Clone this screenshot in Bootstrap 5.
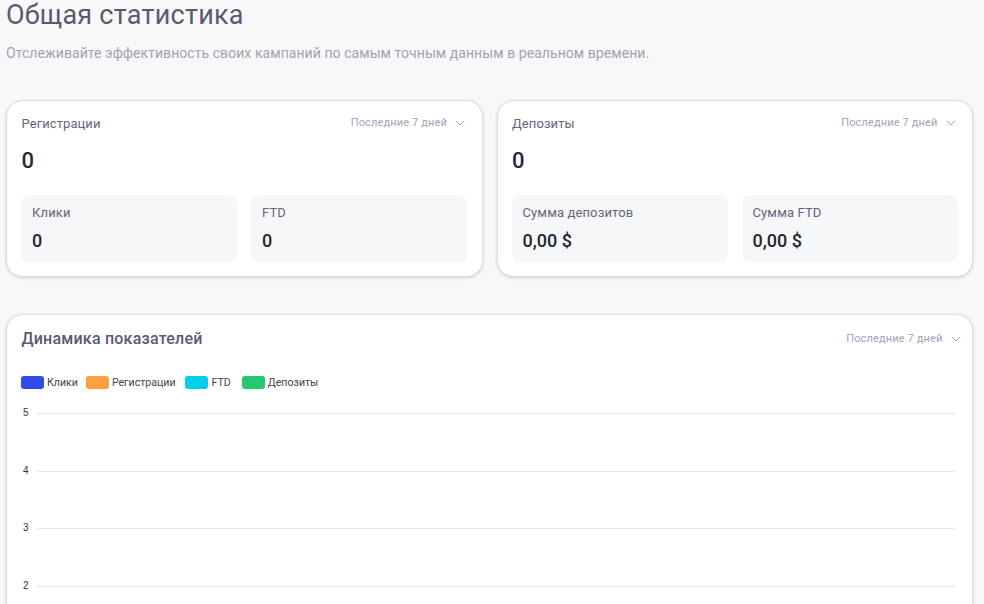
<!DOCTYPE html>
<html lang="ru">
<head>
<meta charset="utf-8">
<title>Общая статистика</title>
<link href="https://cdn.jsdelivr.net/npm/bootstrap@5.3.0/dist/css/bootstrap.min.css" rel="stylesheet">
<style>
html,body{height:604px;overflow:hidden}
body{background:#f8f8f8;font-family:Roboto,"Liberation Sans",sans-serif;color:#5b5a72}
.page-wrap{padding:0 11px 0 6px}
.page-title{font-size:27px;font-weight:400;line-height:30px;margin:0;color:#5b5a72;letter-spacing:.25px}
.page-sub{font-size:14px;line-height:20px;color:#a2a2b6;margin:13px 0 37px;letter-spacing:.06px}
.stat-grid{display:grid;grid-template-columns:1fr 1fr;gap:14px;margin-bottom:37px}
.stat-card{background:#fff;border:1px solid #dcdbe4;border-radius:16px;box-shadow:0 1px 3px rgba(80,80,110,.22)}
.stat-body{padding:14px 14.5px 14px 14.5px;height:175px}
.stat-name{font-size:13px;line-height:18px;color:#66657a;letter-spacing:.08px}
.period{font-size:11px;line-height:16px;color:#a2a2b6;letter-spacing:.14px}
.period svg{width:10px;height:6px;margin-left:8px;margin-right:2px}
.big-val{font-size:22px;font-weight:500;line-height:26px;color:#252a3a;margin:15px 0 21px}
.mini-grid{display:grid;grid-template-columns:1fr 1fr;gap:14px;margin-left:-.5px}
.mini-box{background:#f6f7f8;border-radius:8px;height:67px;padding:9px 11px}
.mini-name{font-size:13px;line-height:18px;color:#66657a;letter-spacing:.13px}
.mini-val{font-size:18px;font-weight:500;line-height:22px;color:#25252f;margin-top:8px}
.chart-head{padding:14px 9.5px 0 14.5px}
.chart-title{font-size:16px;font-weight:500;line-height:20px;color:#5b5a72;margin:0;letter-spacing:.22px}
.chart-card{height:400px}
.legend-row{margin:27px 0 0 14px;font-family:Roboto,sans-serif;font-size:10.6px;line-height:13px;color:#3f3f50}
.swatch{width:23px;height:13px;border-radius:3px;margin-right:3px}
.legend-item{margin-right:9px}
.legend-item.tight{margin-right:8px}
.legend-item.wide{margin-right:11px}
.legend-item.wide .swatch{margin-right:4px}
.plot-area{margin:18px 17px 0 14px}
.plot-row{height:57.7px}
.tick{width:16px;font-family:"Liberation Sans",sans-serif;font-size:10px;line-height:11px;color:#333;padding-left:2px}
.grid-line{height:1px;background:#e6e6e8;margin-top:6px}
.b1{background:#2f4de4}.b2{background:#ff9f40}.b3{background:#00cfec}.b4{background:#27c871}
</style>
</head>
<body>
<div class="page-wrap">
  <h1 class="page-title">Общая статистика</h1>
  <p class="page-sub">Отслеживайте эффективность своих кампаний по самым точным данным в реальном времени.</p>

  <div class="stat-grid">
    <div class="stat-card">
      <div class="stat-body">
        <div class="d-flex justify-content-between align-items-start">
          <div class="stat-name">Регистрации</div>
          <div class="period d-flex align-items-center">Последние 7 дней<svg viewBox="0 0 10 6" fill="none" stroke="#a2a2b6" stroke-width="1"><path d="M1 .8 5 5 9 .8"/></svg></div>
        </div>
        <div class="big-val">0</div>
        <div class="mini-grid">
          <div class="mini-box"><div class="mini-name">Клики</div><div class="mini-val">0</div></div>
          <div class="mini-box"><div class="mini-name">FTD</div><div class="mini-val">0</div></div>
        </div>
      </div>
    </div>
    <div class="stat-card">
      <div class="stat-body">
        <div class="d-flex justify-content-between align-items-start">
          <div class="stat-name">Депозиты</div>
          <div class="period d-flex align-items-center">Последние 7 дней<svg viewBox="0 0 10 6" fill="none" stroke="#a2a2b6" stroke-width="1"><path d="M1 .8 5 5 9 .8"/></svg></div>
        </div>
        <div class="big-val">0</div>
        <div class="mini-grid">
          <div class="mini-box"><div class="mini-name">Сумма депозитов</div><div class="mini-val">0,00 $</div></div>
          <div class="mini-box"><div class="mini-name">Сумма FTD</div><div class="mini-val">0,00 $</div></div>
        </div>
      </div>
    </div>
  </div>

  <div class="stat-card chart-card">
    <div class="chart-head d-flex justify-content-between align-items-center">
      <h2 class="chart-title">Динамика показателей</h2>
      <div class="period d-flex align-items-center">Последние 7 дней<svg viewBox="0 0 10 6" fill="none" stroke="#a2a2b6" stroke-width="1"><path d="M1 .8 5 5 9 .8"/></svg></div>
    </div>
    <div class="legend-row d-flex align-items-center">
      <div class="legend-item tight d-flex align-items-center"><span class="swatch b1"></span>Клики</div>
      <div class="legend-item d-flex align-items-center"><span class="swatch b2"></span>Регистрации</div>
      <div class="legend-item wide d-flex align-items-center"><span class="swatch b3"></span>FTD</div>
      <div class="legend-item d-flex align-items-center"><span class="swatch b4"></span>Депозиты</div>
    </div>
    <div class="plot-area">
      <div class="plot-row d-flex"><span class="tick">5</span><div class="flex-grow-1 grid-line"></div></div>
      <div class="plot-row d-flex"><span class="tick">4</span><div class="flex-grow-1 grid-line"></div></div>
      <div class="plot-row d-flex"><span class="tick">3</span><div class="flex-grow-1 grid-line"></div></div>
      <div class="plot-row d-flex"><span class="tick">2</span><div class="flex-grow-1 grid-line"></div></div>
    </div>
  </div>
</div>
<script src="https://cdn.jsdelivr.net/npm/bootstrap@5.3.0/dist/js/bootstrap.bundle.min.js"></script>
</body>
</html>
